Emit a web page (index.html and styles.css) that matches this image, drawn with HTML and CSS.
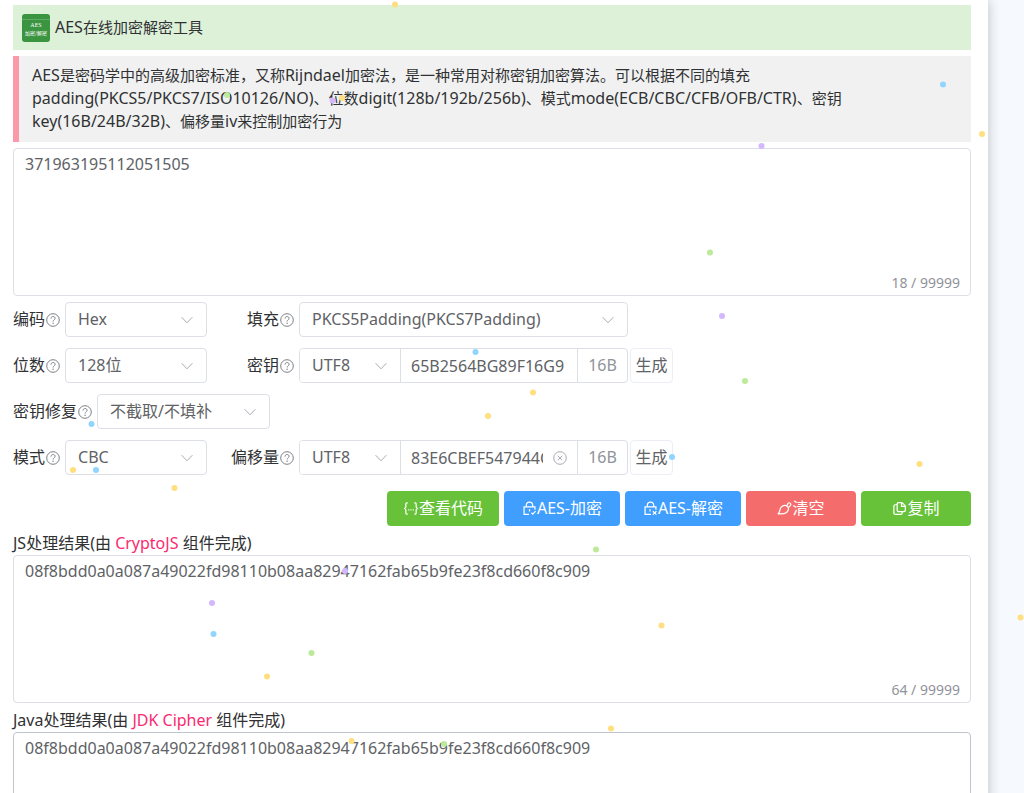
FILE: index.html
```
<!DOCTYPE html>
<html lang="zh-CN">
<head>
<meta charset="utf-8">
<meta name="viewport" content="width=device-width, initial-scale=1">
<title>AES在线加密解密工具</title>
<link rel="stylesheet" href="styles.css">
</head>
<body>
<svg class="symbols" aria-hidden="true">
  <symbol id="help" viewBox="0 0 14 14"><circle cx="7" cy="7" r="6.3" fill="none" stroke="currentColor" stroke-width="1"/><path d="M5 5.6C5 2.8 9.1 2.9 9.1 5.3 9.1 6.7 7.1 6.9 7.1 8.5" fill="none" stroke="currentColor" stroke-width="1"/><circle cx="7.1" cy="10.2" r=".7" fill="currentColor"/></symbol>
  <symbol id="arrow" viewBox="0 0 12 12"><path d="M.6 3.2 6 8.8l5.4-5.6" fill="none" stroke="currentColor" stroke-width="1"/></symbol>
</svg>
<main class="panel">
  <header class="title-bar">
    <svg class="logo" viewBox="0 0 28 28" aria-hidden="true">
      <rect width="28" height="28" rx="3" fill="#3b9440"/>
      <path d="M0 5.5h28" stroke="#6fb273" stroke-width=".7"/>
      <text class="logo-name" x="14" y="12.5">AES</text>
      <text class="logo-sub" x="14" y="21">加密/解密</text>
    </svg>
    <h1 class="title"><span class="latin">AES</span>在线加密解密工具</h1>
  </header>
  <p class="intro"><span class="latin">AES</span>是密码学中的高级加密标准，又称<span class="latin">Rijndael</span>加密法，是一种常用对称密钥加密算法。可以根据不同的填充<br><span class="latin">padding(PKCS5/PKCS7/ISO10126/NO)</span>、位数<span class="latin">digit(128b/192b/256b)</span>、模式<span class="latin">mode(ECB/CBC/CFB/OFB/CTR)</span>、密钥<br><span class="latin">key(16B/24B/32B)</span>、偏移量<span class="latin">iv</span>来控制加密行为</p>
  <div class="area">
    <textarea class="area-text" aria-label="待处理内容">371963195112051505</textarea>
    <span class="count">18 / 99999</span>
  </div>

  <form class="options">
    <div class="row">
      <div class="cell">
        <label class="label" for="encoding">编码<svg class="help"><use href="#help"/></svg></label>
        <div class="pick"><select class="select" id="encoding"><option>Hex</option></select><svg class="arrow"><use href="#arrow"/></svg></div>
      </div>
      <label class="label label-end" for="padding">填充<svg class="help"><use href="#help"/></svg></label>
      <div class="pick pick-wide"><select class="select" id="padding"><option>PKCS5Padding(PKCS7Padding)</option></select><svg class="arrow"><use href="#arrow"/></svg></div>
    </div>
    <div class="row">
      <div class="cell">
        <label class="label" for="digit">位数<svg class="help"><use href="#help"/></svg></label>
        <div class="pick"><select class="select" id="digit"><option>128位</option></select><svg class="arrow"><use href="#arrow"/></svg></div>
      </div>
      <label class="label label-end" for="key">密钥<svg class="help"><use href="#help"/></svg></label>
      <div class="group">
        <div class="pick pick-charset"><select class="select" aria-label="密钥字符集"><option>UTF8</option></select><svg class="arrow"><use href="#arrow"/></svg></div>
        <div class="field"><input class="input" id="key" type="text" value="65B2564BG89F16G9"></div>
        <span class="unit">16B</span>
      </div>
      <button class="generate" type="button">生成</button>
    </div>
    <div class="row">
      <div class="cell cell-long">
        <label class="label" for="fix">密钥修复<svg class="help"><use href="#help"/></svg></label>
        <div class="pick"><select class="select" id="fix"><option>不截取/不填补</option></select><svg class="arrow"><use href="#arrow"/></svg></div>
      </div>
    </div>
    <div class="row">
      <div class="cell">
        <label class="label" for="mode">模式<svg class="help"><use href="#help"/></svg></label>
        <div class="pick"><select class="select" id="mode"><option>CBC</option></select><svg class="arrow"><use href="#arrow"/></svg></div>
      </div>
      <label class="label label-end" for="iv">偏移量<svg class="help"><use href="#help"/></svg></label>
      <div class="group">
        <div class="pick pick-charset"><select class="select" aria-label="偏移量字符集"><option>UTF8</option></select><svg class="arrow"><use href="#arrow"/></svg></div>
        <div class="field">
          <input class="input input-clear" id="iv" type="text" value="83E6CBEF547944CF">
          <button class="clear" type="button" aria-label="清除"><svg class="clear-icon" viewBox="0 0 14 14"><path d="m4.8 4.8 4.400 4.400m0-4.400L4.800 9.200" fill="none" stroke="currentColor"/><circle cx="7" cy="7" r="6.300" fill="none" stroke="currentColor"/></svg></button>
        </div>
        <span class="unit">16B</span>
      </div>
      <button class="generate" type="button">生成</button>
    </div>
  </form>

  <div class="actions">
    <button class="btn green btn-code" type="button"><svg class="icon-code" viewBox="0 0 17 16"><path d="M5 2H4Q3 2 3 3.200v3Q3 8 1 8q2 0 2 1.800v3Q3 14 4 14h1M12 2h1q1 0 1 1.200v3Q14 8 16 8q-2 0-2 1.800v3Q14 14 13 14h-1" fill="none" stroke="currentColor" stroke-width="1.300"/><path d="M5.500 9.500h1.200m1.200 0h1.200m1.200 0h1.200" stroke="currentColor" stroke-width="1.300"/></svg>查看代码</button>
    <button class="btn blue" type="button"><svg class="icon" viewBox="0 0 16 16"><path d="M7.500 14.300H2.200v-8h11.600v3M4.600 6.200V4.700a3.400 3.400 0 0 1 6.800 0v1.500M8 8.800v2.400M10 12.500l1.500 1.500 3-3.200" fill="none" stroke="currentColor" stroke-width="1.300"/></svg>AES-加密</button>
    <button class="btn blue" type="button"><svg class="icon" viewBox="0 0 16 16"><path d="M8.500 14.300H2.200v-8h11.600v3M4.600 6.200V4.700a3.400 3.400 0 0 1 6.800 0v1.500M7.500 8.800v2.400M10.500 10.800l3.800 3.800m0-3.800-3.800 3.800" fill="none" stroke="currentColor" stroke-width="1.300"/></svg>AES-解密</button>
    <button class="btn red" type="button"><svg class="icon" viewBox="0 0 16 16"><path d="M1.200 13.700C3.700 12 2.200 9 4.500 6.500 6.800 4 9.500 4.200 11.200 6c1.700 1.700 1.300 4.300-1 6.200-2.500 2-5.700 1.500-9 1.500ZM10.400 5.200l1.500-2.800c1.200-1.500 3.700.4 2.500 2.200l-2 2.300" fill="none" stroke="currentColor" stroke-width="1.300" stroke-linejoin="round"/></svg>清空</button>
    <button class="btn green" type="button"><svg class="icon" viewBox="0 0 16 16"><path d="M7 1.700h3.800l3.400 3.500v4.600q0 1.500-1.500 1.500H7q-1.500 0-1.500-1.500V3.200Q5.500 1.700 7 1.700ZM10.200 1.900v3.900h3.800M5.400 4H3.500Q2 4 2 5.500v7.300q0 1.500 1.500 1.500h5.800q1.500 0 1.500-1.500v-1.400" fill="none" stroke="currentColor" stroke-width="1.300" stroke-linejoin="round"/></svg>复制</button>
  </div>

  <label class="result-label" for="js-result">JS处理结果(由 <em class="lib">CryptoJS</em> 组件完成)</label>
  <div class="area">
    <textarea class="area-text" id="js-result">08f8bdd0a0a087a49022fd98110b08aa82947162fab65b9fe23f8cd660f8c909</textarea>
    <span class="count">64 / 99999</span>
  </div>
  <label class="result-label" for="java-result">Java处理结果(由 <em class="lib">JDK Cipher</em> 组件完成)</label>
  <div class="area">
    <textarea class="area-text area-hover" id="java-result">08f8bdd0a0a087a49022fd98110b08aa82947162fab65b9fe23f8cd660f8c909</textarea>
  </div>
</main>

<svg class="confetti" aria-hidden="true">
  <g class="dot-yellow"><circle cx="395" cy="4.500" r="3"/><circle cx="982" cy="134" r="3"/><circle cx="342" cy="98" r="3"/><circle cx="533" cy="392.500" r="3"/><circle cx="488" cy="416" r="3"/><circle cx="73" cy="470" r="3"/><circle cx="174.500" cy="488" r="3"/><circle cx="919.500" cy="464" r="3"/><circle cx="1020.500" cy="617.500" r="3"/><circle cx="661.500" cy="625.500" r="3"/><circle cx="267" cy="676.500" r="3"/><circle cx="611" cy="728.500" r="3"/><circle cx="351.500" cy="741" r="3"/></g>
  <g class="dot-blue"><circle cx="943" cy="84.500" r="3"/><circle cx="475.500" cy="352" r="3"/><circle cx="91.500" cy="424" r="3"/><circle cx="96" cy="470" r="3"/><circle cx="672" cy="457" r="3"/><circle cx="213.500" cy="634" r="3"/></g>
  <g class="dot-purple"><circle cx="761.500" cy="146" r="3"/><circle cx="332.500" cy="100.500" r="3"/><circle cx="722" cy="316" r="3"/><circle cx="345" cy="571" r="3"/><circle cx="212" cy="603" r="3"/></g>
  <g class="dot-green"><circle cx="227" cy="95" r="3"/><circle cx="710" cy="252.500" r="3"/><circle cx="745" cy="381" r="3"/><circle cx="596" cy="549.500" r="3"/><circle cx="311.500" cy="653" r="3"/><circle cx="444" cy="744" r="3"/></g>
</svg>
</body>
</html>
```
FILE: styles.css
```
* { box-sizing: border-box; }
html { height: 100%; overflow: hidden; }
body {
  margin: 0;
  height: 100%;
  overflow: hidden;
  background: #f6faff;
  color: #303133;
  font-family: "Noto Sans", "Noto Sans CJK SC", sans-serif;
  font-size: 16px;
  line-height: 23px;
}
button, input, select, textarea { font: inherit; color: inherit; margin: 0; }
svg { flex: none; }
.symbols { position: absolute; width: 0; height: 0; }

.panel {
  margin-right: 36px;
  min-height: 100%;
  padding: 5px 17px 16px 13px;
  background: #fff;
  box-shadow: 0 0 12px rgba(0, 0, 0, 0.24);
}
.title-bar {
  display: flex;
  align-items: center;
  gap: 5px;
  height: 45px;
  padding: 0 9px;
  background: #ddf0d8;
}
.logo { width: 28px; height: 28px; }
.logo-name, .logo-sub { fill: #fff; text-anchor: middle; }
.logo-name { font: 6px "Liberation Serif", serif; }
.logo-sub { font: 5px "Noto Sans CJK SC", sans-serif; }
.title { margin: 0; font-size: 15px; font-weight: 400; }
.intro {
  margin: 6px 0;
  padding: 8px 13px 9px;
  border-left: 6px solid #fb98a9;
  background: #f1f1f1;
  font-size: 15px;
}
.latin { font-size: 16px; line-height: 20px; }

.area { position: relative; height: 148px; }
.area-text {
  display: block;
  width: 100%;
  height: 100%;
  padding: 4px 11px;
  border: 1px solid #dcdfe6;
  border-radius: 4px;
  background: #fff;
  color: #606266;
  resize: none;
  outline: 0;
}
.area-hover { border-color: #c0c4cc; }
.count {
  position: absolute;
  right: 11px;
  bottom: 3px;
  line-height: 20px;
  font-size: 14px;
  color: #909399;
}

.options { display: flex; flex-direction: column; gap: 11px; margin-top: 6px; }
.row { display: flex; align-items: center; height: 35px; }
.cell { display: flex; align-items: center; gap: 5px; width: 194px; }
.cell-long { width: 257px; }
.label { display: flex; align-items: center; gap: 1px; white-space: nowrap; }
.label-end { justify-content: flex-end; width: 87px; margin-right: 5px; }
.help { width: 14px; height: 14px; color: #7c7f84; }
.pick { position: relative; flex: 1; height: 35px; }
.pick-wide { flex: none; width: 329px; }
.select {
  appearance: none;
  width: 100%;
  height: 100%;
  padding: 0 30px 0 12px;
  border: 1px solid #dcdfe6;
  border-radius: 4px;
  background: #fff;
  color: #606266;
  outline: 0;
}
.arrow {
  position: absolute;
  top: 12px;
  right: 14px;
  width: 12px;
  height: 12px;
  color: #a8abb2;
  pointer-events: none;
}
.group {
  display: flex;
  width: 329px;
  height: 35px;
  border: 1px solid #dcdfe6;
  border-radius: 4px;
  overflow: hidden;
}
.pick-charset { flex: none; width: 101px; height: 100%; }
.pick-charset .select { border-width: 0 1px 0 0; border-radius: 0; }
.pick-charset .arrow { top: 11px; }
.field { position: relative; flex: 1; }
.input {
  display: block;
  width: 100%;
  height: 100%;
  padding: 0 10px;
  border: 0;
  background: #fff;
  color: #606266;
  outline: 0;
}
.input-clear { padding-right: 34px; }
.clear {
  position: absolute;
  top: 10px;
  right: 10px;
  width: 14px;
  height: 14px;
  padding: 0;
  border: 0;
  background: none;
  color: #a8abb2;
}
.clear-icon { display: block; }
.unit {
  display: flex;
  align-items: center;
  justify-content: center;
  width: 50px;
  border-left: 1px solid #dcdfe6;
  color: #909399;
}
.generate {
  width: 43px;
  height: 35px;
  margin-left: 2px;
  padding: 0;
  border: 1px solid #ebeef5;
  border-radius: 4px;
  background: #fff;
  color: #606266;
}

.actions { display: flex; justify-content: flex-end; gap: 5px; margin-top: 16px; }
.btn {
  display: flex;
  align-items: center;
  justify-content: center;
  width: 110px;
  height: 35px;
  padding: 0;
  border: 0;
  border-radius: 4px;
  color: #fff;
}
.btn-code { width: 112px; }
.green { background: #67c23a; }
.blue { width: 116px; background: #409eff; }
.red { background: #f56c6c; }
.icon { width: 15px; height: 15px; }
.icon-code { width: 16px; height: 15px; }

.result-label { display: block; margin-top: 6px; }
.lib { color: #fb2a70; font-style: normal; }

.confetti {
  position: absolute;
  top: 0;
  left: 0;
  width: 100%;
  height: 100%;
  pointer-events: none;
}
.dot-yellow { fill: #ffdf80; }
.dot-blue { fill: #91d5ff; }
.dot-purple { fill: #d3b8ff; }
.dot-green { fill: #bdea98; }
```
